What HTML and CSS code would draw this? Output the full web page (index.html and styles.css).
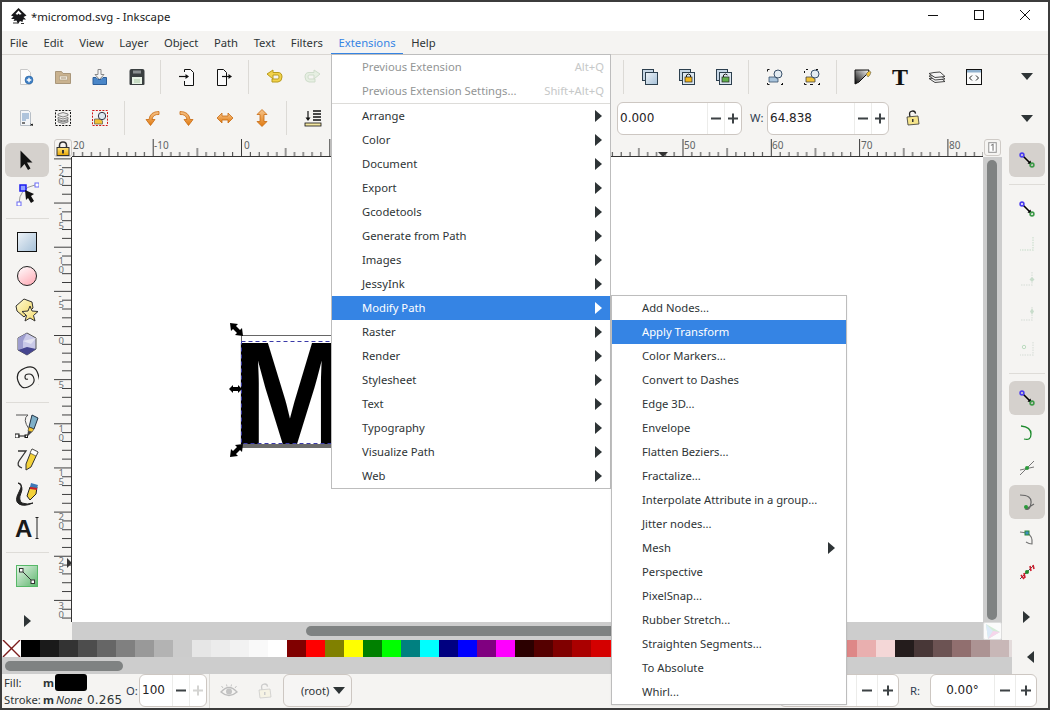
FILE: index.html
```html
<!DOCTYPE html>
<html lang="en">
<head>
<meta charset="utf-8">
<title>Inkscape</title>
<link rel="stylesheet" href="styles.css">
</head>
<body>
<svg class="defs" width="0" height="0" aria-hidden="true">
  <defs>
    <linearGradient id="gBlue" x1="0" y1="0" x2="1" y2="1"><stop offset="0" stop-color="#eef3f8"/><stop offset="1" stop-color="#a5c0d8"/></linearGradient>
    <linearGradient id="gPink" x1="0" y1="0" x2="0.6" y2="1"><stop offset="0" stop-color="#fff"/><stop offset="1" stop-color="#ffb3bd"/></linearGradient>
    <linearGradient id="gYellow" x1="0" y1="0" x2="1" y2="1"><stop offset="0" stop-color="#fffbd8"/><stop offset="1" stop-color="#f2d65e"/></linearGradient>
    <linearGradient id="gGold" x1="0" y1="0" x2="0" y2="1"><stop offset="0" stop-color="#ffe680"/><stop offset="1" stop-color="#e8a400"/></linearGradient>
    <linearGradient id="gGreen" x1="0" y1="0" x2="1" y2="1"><stop offset="0" stop-color="#e8f6ea"/><stop offset="1" stop-color="#5cb56c"/></linearGradient>
    <linearGradient id="gOrange" x1="0" y1="0" x2="0" y2="1"><stop offset="0" stop-color="#f7c48a"/><stop offset="1" stop-color="#e07a10"/></linearGradient>
    <linearGradient id="gPen" x1="0" y1="1" x2="1" y2="0"><stop offset="0" stop-color="#000"/><stop offset="1" stop-color="#fff"/></linearGradient>
    <symbol id="minus" viewBox="0 0 11 11"><rect x="0" y="4.5" width="10" height="2" fill="#3d4245"/></symbol>
    <symbol id="plus" viewBox="0 0 11 11"><path d="M0 5.5h10M5 .5v10" stroke="#3d4245" stroke-width="2" fill="none"/></symbol>
    <symbol id="plusOff" viewBox="0 0 11 11"><path d="M0 5.5h10M5 .5v10" stroke="#d4d4d2" stroke-width="2" fill="none"/></symbol>
    <symbol id="snap" viewBox="0 0 16 16"><path d="M4 4l7 7" stroke="#000" stroke-width="1.6"/><path d="M12.5 12.5l-1-4-3 3z" fill="#000"/><circle cx="3" cy="3" r="1.9" fill="none" stroke="#4a3cf0" stroke-width="1.6"/><circle cx="13" cy="13" r="1.9" fill="none" stroke="#3d9a48" stroke-width="1.6"/></symbol>
  </defs>
</svg>

<div class="window">
  <header class="title">
    <svg class="logo" width="17" height="17" viewBox="0 0 17 17"><path d="M8.500 0L1 7.500l2.500 1L1 11h3.500L3.500 13l3-.5L8 16l2-3 2.500 1 .5-2.500h3L13.500 9l3-1.500z" fill="#17171a"/><path d="M8.500 2.500L5.500 6l2 .8 1-1.300 1.200 1.300 2-.8z" fill="#fff"/><path d="M3 14.500h5v1H3zM11 15h3v1h-3z" fill="#333"/></svg>
    <span class="title-text">*micromod.svg - Inkscape</span>
    <div class="winctl">
      <svg width="46" height="29" viewBox="0 0 46 29"><path d="M18 13.500h10" stroke="#111"/></svg>
      <svg width="46" height="29" viewBox="0 0 46 29"><rect x="18.500" y="8.500" width="9" height="9" fill="none" stroke="#111"/></svg>
      <svg width="46" height="29" viewBox="0 0 46 29"><path d="M18 8l10 10M28 8L18 18" stroke="#111" fill="none"/></svg>
    </div>
  </header>

  <nav class="menubar">
    <span class="mi">File</span><span class="mi">Edit</span><span class="mi">View</span><span class="mi">Layer</span><span class="mi">Object</span><span class="mi">Path</span><span class="mi">Text</span><span class="mi">Filters</span><span class="mi mi-open">Extensions</span><span class="mi">Help</span>
  </nav>

  <div class="toolbar tb1">
    <div class="btn"><svg width="18" height="18" viewBox="0 0 18 18"><path d="M3.500 1.500h7l3 3v12h-10z" fill="#fbfbfb" stroke="#c9c9c9"/><circle cx="12" cy="12" r="4" fill="#3f7fc4" stroke="#1f5a9a" stroke-width=".5"/><path d="M9.700 12h4.600M12 9.700v4.600" stroke="#fff" stroke-width="1.400"/></svg></div>
    <div class="btn"><svg width="18" height="18" viewBox="0 0 18 18"><path d="M1.500 3.500h6l1.500 2h7.500v10h-15z" fill="#c9b28f" stroke="#a9967a"/><rect x="5.500" y="8" width="8" height="4" fill="#efe8dc" stroke="#a9967a" stroke-width=".6"/><path d="M7 10h5" stroke="#a9967a"/></svg></div>
    <div class="btn"><svg width="18" height="18" viewBox="0 0 18 18"><path d="M7 1.500h3v5h3l-4.500 5-4.500-5h3z" fill="#f5f5f5" stroke="#8a8a8a"/><path d="M2 9.500h3l2 2h3l2-2h3.500v7H2z" fill="#4a86c8" stroke="#2d5f9a"/></svg></div>
    <div class="btn"><svg width="18" height="18" viewBox="0 0 18 18"><path d="M1.500 3q0-2 2-2h11q2 0 2 2v13q0 1-1 1h-13q-1 0-1-1z" fill="#3a3f40"/><rect x="5" y="2.500" width="8" height="3" fill="#8b9091"/><rect x="4" y="9" width="10" height="7" fill="#e7f2e5"/><path d="M6 12h6M6 14h6" stroke="#a8c5a3"/></svg></div>
    <i class="sep sep-a"></i>
    <div class="btn"><svg width="18" height="18" viewBox="0 0 18 18"><path d="M6.500 4V1.500h6l3 3v13h-9V13" fill="#fafafa" stroke="#111"/><path d="M1 8.500h9" stroke="#111" stroke-width="1.200"/><path d="M11 8.500L7.500 6v5z" fill="#111"/></svg></div>
    <div class="btn"><svg width="18" height="18" viewBox="0 0 18 18"><path d="M2.500 1.500h6l3 3v13h-9z" fill="#fafafa" stroke="#111"/><path d="M7 8.500h8" stroke="#111" stroke-width="1.200"/><path d="M17 8.500L13.500 6v5z" fill="#111"/></svg></div>
    <i class="sep sep-b"></i>
    <div class="btn"><svg width="18" height="18" viewBox="0 0 18 18"><path d="M1 6l6-4v2.500h5q4 0 4 4.500t-4 5H6v-3h6q1 0 1-2t-1-2H7V11z" fill="#f2d24a" stroke="#b89a1c"/></svg></div>
    <div class="btn"><svg width="18" height="18" viewBox="0 0 18 18"><path d="M17 6l-6-4v2.500H6Q2 4.500 2 9t4 5h6v-3H6q-1 0-1-2t1-2h5V11z" fill="#e6efe2" stroke="#cfdccb"/></svg></div>
    <div class="spacer"></div>
    <i class="sep sep-c"></i>
    <div class="btn"><svg width="18" height="18" viewBox="0 0 18 18"><rect x="1.500" y="1.500" width="11" height="11" fill="#c7d7e6" stroke="#2c3f4e"/><rect x="4.500" y="4.500" width="12" height="12" fill="url(#gBlue)" stroke="#2c3f4e"/></svg></div>
    <div class="btn"><svg width="18" height="18" viewBox="0 0 18 18"><rect x="1.500" y="1.500" width="11" height="11" fill="#c7d7e6" stroke="#2c3f4e"/><rect x="4.500" y="4.500" width="12" height="12" fill="#dce7f0" stroke="#2c3f4e"/><rect x="7" y="9" width="7" height="5" fill="#f4b81e" stroke="#222" stroke-width=".7"/><path d="M8.500 9V7q2-2 4 0v2" fill="none" stroke="#222"/></svg></div>
    <div class="btn"><svg width="18" height="18" viewBox="0 0 18 18"><rect x="1.500" y="1.500" width="11" height="11" fill="#c7d7e6" stroke="#2c3f4e"/><rect x="4.500" y="4.500" width="12" height="12" fill="#dce7f0" stroke="#2c3f4e"/><rect x="7" y="9" width="7" height="5" fill="#5fae4c" stroke="#222" stroke-width=".7"/><path d="M8.500 9V7q2-2 4 0" fill="none" stroke="#222"/></svg></div>
    <i class="sep sep-b"></i>
    <div class="btn"><svg width="18" height="18" viewBox="0 0 18 18"><path d="M1.500 1.500h2M1.500 16.500h2M15 16.500h2M1.500 1.500v2M1.500 15v1.500M16.500 15v1.500" stroke="#111" fill="none"/><path d="M3 9h6l3 2v3H3z" fill="#a9c4dc" stroke="#39506a" stroke-width=".8"/><circle cx="12" cy="6" r="4" fill="#e4ecf2" stroke="#39506a"/></svg></div>
    <div class="btn"><svg width="18" height="18" viewBox="0 0 18 18"><path d="M3 1.500h2M13 1.500h2M1.500 16.500h2M15 16.500h2M1.500 3v2M1.500 15v1.500M16.500 15v1.500M7 16.500h3" stroke="#111" fill="none"/><path d="M3 9h6l3 2v3H3z" fill="#f0c238" stroke="#444" stroke-width=".8"/><circle cx="12" cy="6" r="4" fill="#e4ecf2" stroke="#39506a"/></svg></div>
    <i class="sep sep-b"></i>
    <div class="btn"><svg width="18" height="18" viewBox="0 0 18 18"><path d="M1 2h14l-1 3-9 9-4 2z" fill="url(#gPen)" stroke="#111"/><path d="M12 6l3-3 2 1-1 3-2 2z" fill="#f0c238" stroke="#555" stroke-width=".5"/></svg></div>
    <div class="btn"><svg class="ttool" width="18" height="18" viewBox="0 0 18 18"><text x="9" y="17" text-anchor="middle">T</text></svg></div>
    <div class="btn"><svg width="18" height="18" viewBox="0 0 18 18"><path d="M1 10.500l6 4 10-1-5-4z" fill="#f4f4f4" stroke="#333" stroke-width=".9"/><path d="M1 8l6 4 10-1-5-4z" fill="#f4f4f4" stroke="#333" stroke-width=".9"/><path d="M1 5.500l6 4 10-1-5-4.500-6 .5z" fill="#f4f4f4" stroke="#333" stroke-width=".9"/></svg></div>
    <div class="btn"><svg width="18" height="18" viewBox="0 0 18 18"><rect x="1.500" y="1.500" width="15" height="15" fill="#fafafa" stroke="#111"/><rect x="2" y="2" width="14" height="2.500" fill="#8fb0cd"/><path d="M7 7.500L4.500 10 7 12.500M11 7.500L13.500 10 11 12.500" fill="none" stroke="#222"/></svg></div>
    <div class="more"><i class="tri-down"></i></div>
  </div>

  <div class="toolbar tb2">
    <div class="btn"><svg width="18" height="18" viewBox="0 0 18 18"><path d="M3.500 1.500h8l2 2v13h-10z" fill="#f3f5f8" stroke="#b8bfc7"/><path d="M5 5h7M5 7h7M5 9h7M5 11h4" stroke="#6c93c0" stroke-width="1.200"/><rect x="5" y="13" width="3" height="2" fill="#777"/><path d="M13.500 15l2.500 1.500M16 15l-2.500 1.500" stroke="#111"/></svg></div>
    <div class="btn"><svg width="18" height="18" viewBox="0 0 18 18"><rect x="1.500" y="1.500" width="15" height="15" fill="none" stroke="#111" stroke-dasharray="2 1.300"/><path d="M4 5l5-1.500 5 1.500v1.500l-5 1.500-5-1.500zM4 8.500l5 1.500 5-1.500v2l-5 1.500-5-1.500zM4 11.500l5 1.500 5-1.500v1.500l-5 1.500-5-1.500z" fill="#e9e9e9" stroke="#555" stroke-width=".7"/></svg></div>
    <div class="btn"><svg width="18" height="18" viewBox="0 0 18 18"><rect x="1.500" y="1.500" width="15" height="15" fill="none" stroke="#d01616" stroke-dasharray="2 1.300"/><path d="M3.500 10h6l2 2v3h-8z" fill="#f0c238" stroke="#555" stroke-width=".7"/><circle cx="11" cy="7" r="3.700" fill="#dce7f0" stroke="#334"/></svg></div>
    <i class="sep sep-d"></i>
    <div class="btn"><svg width="18" height="18" viewBox="0 0 18 18"><path d="M17 2.500v3q-6-.5-7 5h3l-4.500 6-4.500-6h3q1-8 10-8z" fill="url(#gOrange)" stroke="#c86a10" stroke-width=".8"/></svg></div>
    <div class="btn"><svg width="18" height="18" viewBox="0 0 18 18"><path d="M1 2.500v3q6-.5 7 5H5l4.500 6 4.500-6h-3q-1-8-10-8z" fill="url(#gOrange)" stroke="#c86a10" stroke-width=".8"/></svg></div>
    <div class="btn"><svg width="18" height="18" viewBox="0 0 18 18"><path d="M1 9l5-5v3h6V4l5 5-5 5v-3H6v3z" fill="url(#gOrange)" stroke="#c86a10" stroke-width=".8"/></svg></div>
    <div class="btn"><svg width="18" height="18" viewBox="0 0 18 18"><path d="M9 .5l5 5h-3v7h3l-5 5-5-5h3v-7H4z" fill="url(#gOrange)" stroke="#c86a10" stroke-width=".8"/></svg></div>
    <i class="sep sep-d"></i>
    <div class="btn"><svg width="18" height="18" viewBox="0 0 18 18"><rect x="1" y="14" width="16" height="3" fill="#f3e6a0" stroke="#111" stroke-width=".8"/><path d="M4 2v8" stroke="#111" stroke-width="1.200"/><path d="M1.500 8.500h5L4 12z" fill="#111"/><path d="M9 2h8M9 5h8M9 8h8M9 11h8" stroke="#111" stroke-width="1.600"/></svg></div>
    <div class="spacer"></div>
    <div class="spin spin-x"><span class="val">0.000</span><span class="cell"><svg width="11" height="11"><use href="#minus"/></svg></span><span class="cell"><svg width="11" height="11"><use href="#plus"/></svg></span></div>
    <span class="lab lab-w">W:</span>
    <div class="spin spin-w"><span class="val">64.838</span><span class="cell"><svg width="11" height="11"><use href="#minus"/></svg></span><span class="cell"><svg width="11" height="11"><use href="#plus"/></svg></span></div>
    <div class="lockbtn"><svg width="14" height="16" viewBox="0 0 14 16"><path d="M4 7V4q0-3 3-3t3 3" transform="rotate(-8 7 7)" fill="none" stroke="#222" stroke-width="1.300"/><path d="M1 7l11-1 1 8-11 1z" fill="#f5e48b" stroke="#333" stroke-width=".8"/><rect x="6" y="9" width="1.500" height="3" fill="#333"/></svg></div>
    <div class="more"><i class="tri-down"></i></div>
  </div>

  <main class="work">
    <aside class="tools">
      <div class="tool active"><svg width="24" height="24" viewBox="0 0 24 24"><path d="M5.500 2.500v18l4-4.500 3.500 6 2.500-1.500-3.500-6h5.500z" fill="#111"/></svg></div>
      <div class="tool"><svg width="24" height="24" viewBox="0 0 24 24"><path d="M4 22Q4 6 20 3" fill="none" stroke="#999" stroke-width="1"/><rect x="20" y="1" width="4" height="4" fill="#fff" stroke="#6a6af5"/><rect x="2" y="20" width="4" height="4" fill="#fff" stroke="#6a6af5"/><rect x="5" y="3" width="6" height="6" fill="#8fa0ff" stroke="#1b1bf0" stroke-width="1.500"/><path d="M10 8l9 4-3 2 3 5-3 2-3-5-2 2z" fill="#111"/></svg></div>
      <i class="hsep"></i>
      <div class="tool"><svg width="24" height="24" viewBox="0 0 24 24"><rect x="2.500" y="2.500" width="19" height="19" fill="url(#gBlue)" stroke="#111" stroke-width="1"/></svg></div>
      <div class="tool"><svg width="24" height="24" viewBox="0 0 24 24"><circle cx="12" cy="12" r="9.500" fill="url(#gPink)" stroke="#222"/></svg></div>
      <div class="tool"><svg width="24" height="24" viewBox="0 0 24 24"><path d="M9 1l8 3 1 6-9 9-7-6-1-5z" fill="url(#gYellow)" stroke="#333"/><path d="M15 8l2 5 6 .5-4.500 4 1.500 5.500-5-3-5 3 1.500-5.500L7 13.500l6-.5z" fill="url(#gYellow)" stroke="#333"/></svg></div>
      <div class="tool"><svg width="24" height="24" viewBox="0 0 24 24"><path d="M12 1l9 5v11l-9 6-9-5V6z" fill="#c9c9e8" stroke="#555"/><path d="M12 1L3 6v12l5-2 0-7z" fill="#9d9dce"/><path d="M3 18l9 5 9-6-9-2z" fill="#45458f"/><path d="M8 9l13-3-5 6z" fill="#e4e4f2"/></svg></div>
      <div class="tool"><svg width="24" height="24" viewBox="0 0 24 24"><path d="M13 13q-3 1-3-2t4-3 5 5-6 8-10-6 7-13 13 6 1 11" fill="none" stroke="#222" stroke-width="1.200"/></svg></div>
      <i class="hsep"></i>
      <div class="tool"><svg width="24" height="24" viewBox="0 0 24 24"><path d="M1 1h12q-6 4 1 14" fill="none" stroke="#555"/><rect x="0" y="20" width="4" height="4" fill="#fff" stroke="#111"/><rect x="10" y="21" width="2.500" height="2.500" fill="#fff" stroke="#111"/><path d="M3 22h8" stroke="#111"/><path d="M17 1l6 3-4 11-5-2z" fill="#7fb0c8" stroke="#234"/><path d="M14 13l5 2-2 3-4-1z" fill="#f3c730" stroke="#333" stroke-width=".6"/><path d="M13 17l4 1-5 5z" fill="#444"/></svg></div>
      <div class="tool"><svg width="24" height="24" viewBox="0 0 24 24"><path d="M3 3h8L4 13q-3 5 3 7" fill="none" stroke="#333" stroke-width="1.300"/><path d="M17 1l6 3-7 15-5 3 0-6z" fill="#f3d23a" stroke="#333"/><path d="M17 1l6 3-2 4-6-3z" fill="#fff" stroke="#333" stroke-width=".6"/></svg></div>
      <div class="tool"><svg width="24" height="24" viewBox="0 0 24 24"><path d="M3 1q6 3 3 10t1 10q5 2 11 0-9 4-14 1T4 10 3 1z" fill="#222" stroke="#222"/><path d="M15 5h7l-1 7-6 6-3-4z" fill="#f3d23a" stroke="#222"/><path d="M16 1l7 2-1 3-7-1z" fill="#3d78b8"/><path d="M15 5l7 1v2l-7-1z" fill="#c8202a"/></svg></div>
      <div class="tool"><svg class="atool" width="24" height="24" viewBox="0 0 24 24"><text x="0" y="21">A</text><path d="M20.500 1.500h3M22 1.500v21M20.500 22.500h3" stroke="#222" fill="none"/></svg></div>
      <i class="hsep"></i>
      <div class="tool"><svg width="24" height="24" viewBox="0 0 24 24"><rect x=".5" y=".5" width="21" height="21" fill="url(#gGreen)" stroke="#57b868" transform="translate(1 1)"/><path d="M6 6l12 12" stroke="#333"/><rect x="4.500" y="4.500" width="3.500" height="3.500" fill="#fff" stroke="#333"/><rect x="16" y="16" width="3.500" height="3.500" fill="#fff" stroke="#333"/></svg></div>
      <div class="tool-arrow"><i class="tri-right big"></i></div>
    </aside>

    <div class="corner"><svg width="14" height="15" viewBox="0 0 14 15"><path d="M3.500 7V4.500Q3.500 1 7 1t3.500 3.500V7" fill="none" stroke="#333" stroke-width="1.500"/><rect x="1" y="6.500" width="12" height="8" fill="url(#gGold)" stroke="#333"/><rect x="6" y="9" width="2" height="3.500" fill="#333"/></svg></div>

    <svg class="ruler-top" width="911" height="19" viewBox="72 138 911 19">
      <defs>
        <pattern id="tickH" patternUnits="userSpaceOnUse" x="241" y="138" width="88.300" height="19">
          <path d="M.5 1v18M44.650 10v9M9.330 14v5M18.160 14v5M26.990 14v5M35.820 14v5M53.480 14v5M62.310 14v5M71.140 14v5M79.970 14v5" stroke="#3a3a3a" fill="none"/>
        </pattern>
      </defs>
      <rect x="72" y="138" width="911" height="19" fill="url(#tickH)"/>
      <path d="M72 156.500H983" stroke="#333"/>
      <text class="rt" x="73" y="149">20</text>
      <text class="rt" x="154" y="149">-10</text>
      <text class="rt" x="244" y="149">0</text>
      <text class="rt" x="684" y="149">50</text>
      <text class="rt" x="772" y="149">60</text>
      <text class="rt" x="861" y="149">70</text>
      <text class="rt" x="949" y="149">80</text>
      <path d="M658 152h10l-5 5z" fill="#333"/>
    </svg>

    <svg class="ruler-left" width="18" height="465" viewBox="54 157 18 465">
      <defs>
        <pattern id="tickV" patternUnits="userSpaceOnUse" x="54" y="158.400" width="18" height="44.150">
          <path d="M0 .5h18M8 9.330h10M8 18.160h10M8 26.990h10M8 35.820h10" stroke="#3a3a3a" fill="none"/>
        </pattern>
      </defs>
      <rect x="54" y="157" width="18" height="465" fill="url(#tickV)"/>
      <path d="M71.500 157V622" stroke="#333"/>
      <g class="rl">
        <text x="58.500" y="168">-<tspan x="58.500" dy="8">2</tspan><tspan x="58.500" dy="9">0</tspan></text>
        <text x="58.500" y="211">-<tspan x="58.500" dy="9">1</tspan><tspan x="58.500" dy="9">5</tspan></text>
        <text x="58.500" y="255">-<tspan x="58.500" dy="9">1</tspan><tspan x="58.500" dy="9">0</tspan></text>
        <text x="58.500" y="299">-<tspan x="58.500" dy="9">5</tspan></text>
        <text x="58.500" y="344">0</text>
        <text x="58.500" y="388">5</text>
        <text x="58.500" y="432">1<tspan x="58.500" dy="9">0</tspan></text>
        <text x="58.500" y="476">1<tspan x="58.500" dy="9">5</tspan></text>
        <text x="58.500" y="520">2<tspan x="58.500" dy="9">0</tspan></text>
        <text x="58.500" y="564">2<tspan x="58.500" dy="9">5</tspan></text>
        <text x="58.500" y="609">3<tspan x="58.500" dy="9">0</tspan></text>
      </g>
      <path d="M67 558l5 5-5 5z" fill="#333"/>
    </svg>

    <div class="canvas">
      <svg width="911" height="465" viewBox="72 157 911 465">
        <path d="M241.500 446V335.500H340" fill="none" stroke="#666"/>
        <rect x="242" y="444" width="100" height="4" fill="#6b6b6b"/>
        <text class="bigM" transform="translate(231.500 444) scale(.96 1)" x="0" y="0">M</text>
        <rect x="241.500" y="341.500" width="120" height="102" fill="none" stroke="#3a3aa8" stroke-dasharray="4 3"/>
        <path d="M230 323l8 1-2 2 4 4 2-2 1 8-8-1 2-2-4-4-2 2z" fill="#000"/>
        <path d="M229 389l4-4v2h5v-2l4 4-4 4v-2h-5v2z" fill="#000"/>
        <path d="M230 456l8-1-2-2 4-4 2 2 1-8-8 1 2 2-4 4-2-2z" transform="translate(0 1)" fill="#000"/>
      </svg>
    </div>

    <div class="vscroll">
      <div class="guide"><svg width="14" height="14" viewBox="0 0 14 14"><rect x="3.500" y="2.500" width="7" height="9" fill="#fff" stroke="#999"/><path d="M5.500 5l2-1v6" fill="none" stroke="#777"/></svg></div>
      <div class="vthumb"></div>
    </div>

    <aside class="snapbar">
      <div class="snap active"><svg width="16" height="16"><use href="#snap"/></svg></div>
      <i class="hsep"></i>
      <div class="snap"><svg width="16" height="16"><use href="#snap"/></svg></div>
      <div class="snap"><svg width="16" height="16" viewBox="0 0 16 16"><path d="M14 1v13H1" fill="none" stroke="#d5e3d6" stroke-width="1.500" stroke-dasharray="1.500 1"/></svg></div>
      <div class="snap"><svg width="16" height="16" viewBox="0 0 16 16"><path d="M13 1v13H1" fill="none" stroke="#dfe4df" stroke-width="1.500" stroke-dasharray="1.500 1"/><path d="M13 6l2.500 2.500L13 11l-2.500-2.500z" fill="#c8dccb"/></svg></div>
      <div class="snap"><svg width="16" height="16" viewBox="0 0 16 16"><path d="M13 1v13H1" fill="none" stroke="#dfe4df" stroke-width="1.500" stroke-dasharray="1.500 1"/><path d="M13 2.500l2 3-2 3-2-3z" fill="#c8dccb"/></svg></div>
      <div class="snap"><svg width="16" height="16" viewBox="0 0 16 16"><path d="M14 1v13H1" fill="none" stroke="#dfe4df" stroke-width="1.500" stroke-dasharray="1.500 1"/><circle cx="5" cy="6" r="1.700" fill="none" stroke="#bcdcc0"/></svg></div>
      <i class="hsep hsep-r"></i>
      <div class="snap active"><svg width="16" height="16"><use href="#snap"/></svg></div>
      <div class="snap"><svg width="16" height="16" viewBox="0 0 16 16"><path d="M2 1q10 1 10 8t-7 5" fill="none" stroke="#1c8a2c" stroke-width="1.300"/></svg></div>
      <div class="snap"><svg width="16" height="16" viewBox="0 0 16 16"><path d="M1 15L15 1M1 10l14-3" stroke="#777" fill="none"/><circle cx="8" cy="8" r="2" fill="#2a9a3a"/></svg></div>
      <div class="snap active"><svg width="16" height="16" viewBox="0 0 16 16"><path d="M1 1q12 0 11 8t-6 6M15 10l-8 5" fill="none" stroke="#666" stroke-width="1.200"/><circle cx="7" cy="13" r="2" fill="#2a9a3a"/></svg></div>
      <div class="snap"><svg width="16" height="16" viewBox="0 0 16 16"><path d="M1 3l7 1q6 3 5 11-3 0-6-2" fill="none" stroke="#777" stroke-width="1.200"/><rect x="6" y="2" width="4" height="4" fill="#3f8fc0" stroke="#2a8a36"/></svg></div>
      <div class="snap"><svg width="16" height="16" viewBox="0 0 16 16"><path d="M1 15L15 1" stroke="#555"/><path d="M2 11l3 4M5 9l1 5M11 2l1 5M14 1l1 4" stroke="#d01c2c" stroke-width="1.600"/><circle cx="8" cy="8" r="2" fill="#1f8a2c"/></svg></div>
      <div class="tool-arrow tool-arrow-r"><i class="tri-right big"></i></div>
    </aside>

    <div class="hscroll"><div class="hthumb"></div><div class="colorwheel"><svg width="17" height="17" viewBox="0 0 17 17"><path d="M2 1l14 8-12 7z" fill="#d4ecd8"/><path d="M2 1l7 7-5 8z" fill="#dceaf8"/><path d="M16 9l-7-1-5 8z" fill="#f6d6ec"/></svg></div></div>

    <div class="palette">
      <div class="sw-x"><svg width="19" height="17" viewBox="0 0 19 17"><path d="M1 0l17 17M18 0L1 17" stroke="#7c1c1c" stroke-width="1.400"/></svg></div>
      <i class="sw" style="background:#000000"></i><i class="sw" style="background:#1a1a1a"></i><i class="sw" style="background:#333333"></i><i class="sw" style="background:#4d4d4d"></i><i class="sw" style="background:#666666"></i><i class="sw" style="background:#808080"></i><i class="sw" style="background:#999999"></i><i class="sw" style="background:#b3b3b3"></i><i class="sw" style="background:#cccccc"></i><i class="sw" style="background:#e6e6e6"></i><i class="sw" style="background:#ececec"></i><i class="sw" style="background:#f2f2f2"></i><i class="sw" style="background:#f9f9f9"></i><i class="sw" style="background:#ffffff"></i><i class="sw" style="background:#800000"></i><i class="sw" style="background:#ff0000"></i><i class="sw" style="background:#808000"></i><i class="sw" style="background:#ffff00"></i><i class="sw" style="background:#008000"></i><i class="sw" style="background:#00ff00"></i><i class="sw" style="background:#008080"></i><i class="sw" style="background:#00ffff"></i><i class="sw" style="background:#000080"></i><i class="sw" style="background:#0000ff"></i><i class="sw" style="background:#800080"></i><i class="sw" style="background:#ff00ff"></i><i class="sw" style="background:#2b0000"></i><i class="sw" style="background:#550000"></i><i class="sw" style="background:#800000"></i><i class="sw" style="background:#aa0000"></i><i class="sw" style="background:#d40000"></i><i class="sw" style="background:#ff0000"></i><i class="sw" style="background:#ff2a2a"></i><i class="sw" style="background:#ff5555"></i><i class="sw" style="background:#ff8080"></i><i class="sw" style="background:#ffaaaa"></i><i class="sw" style="background:#ffd5d5"></i><i class="sw" style="background:#280b0b"></i><i class="sw" style="background:#501616"></i><i class="sw" style="background:#782121"></i><i class="sw" style="background:#a02c2c"></i><i class="sw" style="background:#c83737"></i><i class="sw" style="background:#d35f5f"></i><i class="sw" style="background:#de8787"></i><i class="sw" style="background:#e9afaf"></i><i class="sw" style="background:#f4d7d7"></i><i class="sw" style="background:#241c1c"></i><i class="sw" style="background:#483737"></i><i class="sw" style="background:#6c5353"></i><i class="sw" style="background:#916f6f"></i><i class="sw" style="background:#ac9393"></i><i class="sw" style="background:#c8b7b7"></i><i class="sw" style="background:#e3dbdb"></i>
    </div>
    <div class="palscroll"><div class="palthumb"></div></div>
    <div class="palarrow"><i class="tri-left big"></i></div>
  </main>

  <footer class="status">
    <div class="fs">
      <div class="fs-row"><span class="fs-lab">Fill:</span><b class="fs-m">m</b><i class="fs-swatch"></i></div>
      <div class="fs-row"><span class="fs-lab">Stroke:</span><b class="fs-m">m</b><em class="fs-none">None</em><span class="fs-w">0.265</span></div>
    </div>
    <span class="lab lab-o">O:</span>
    <div class="spin spin-o"><span class="val">100</span><span class="cell"><svg width="11" height="11"><use href="#minus"/></svg></span><span class="cell"><svg width="11" height="11"><use href="#plusOff"/></svg></span></div>
    <i class="vsep"></i>
    <div class="st-ic st-first"><svg width="18" height="14" viewBox="0 0 18 14"><path d="M1 8q8-9 16 0-8 7-16 0z" fill="none" stroke="#bdbdbd" stroke-width="1.300"/><circle cx="9" cy="7.500" r="3" fill="#c4c4c4"/><path d="M3 4L1.500 2M7 2.500L6.500 .5M11 2.500l.5-2M15 4l1.500-2" stroke="#c4c4c4"/></svg></div>
    <div class="st-ic"><svg width="14" height="16" viewBox="0 0 14 16"><path d="M4 7V4q0-3 3-3t3 3" transform="rotate(-8 7 7)" fill="none" stroke="#ccc" stroke-width="1.300"/><path d="M1 7l11-1 1 8-11 1z" fill="#f6f3e4" stroke="#ccc" stroke-width=".8"/><rect x="6" y="9" width="1.500" height="3" fill="#ccc"/></svg></div>
    <div class="layer"><span class="layer-name">(root)</span><i class="tri-down"></i></div>
    <div class="status-right">
      <div class="spin spin-y"><span class="val"></span><span class="cell"><svg width="11" height="11"><use href="#minus"/></svg></span><span class="cell"><svg width="11" height="11"><use href="#plus"/></svg></span></div>
      <span class="lab lab-r">R:</span>
      <div class="spin spin-r"><span class="val val-c">0.00°</span><span class="cell"><svg width="11" height="11"><use href="#minus"/></svg></span><span class="cell"><svg width="11" height="11"><use href="#plus"/></svg></span></div>
    </div>
  </footer>

  <div class="menu menu-ext">
    <div class="item off"><span>Previous Extension</span><span class="key">Alt+Q</span></div>
    <div class="item off"><span>Previous Extension Settings...</span><span class="key">Shift+Alt+Q</span></div>
    <i class="menu-sep"></i>
    <div class="item"><span>Arrange</span><i class="tri-right"></i></div>
    <div class="item"><span>Color</span><i class="tri-right"></i></div>
    <div class="item"><span>Document</span><i class="tri-right"></i></div>
    <div class="item"><span>Export</span><i class="tri-right"></i></div>
    <div class="item"><span>Gcodetools</span><i class="tri-right"></i></div>
    <div class="item"><span>Generate from Path</span><i class="tri-right"></i></div>
    <div class="item"><span>Images</span><i class="tri-right"></i></div>
    <div class="item"><span>JessyInk</span><i class="tri-right"></i></div>
    <div class="item sel"><span>Modify Path</span><i class="tri-right"></i></div>
    <div class="item"><span>Raster</span><i class="tri-right"></i></div>
    <div class="item"><span>Render</span><i class="tri-right"></i></div>
    <div class="item"><span>Stylesheet</span><i class="tri-right"></i></div>
    <div class="item"><span>Text</span><i class="tri-right"></i></div>
    <div class="item"><span>Typography</span><i class="tri-right"></i></div>
    <div class="item"><span>Visualize Path</span><i class="tri-right"></i></div>
    <div class="item"><span>Web</span><i class="tri-right"></i></div>
  </div>

  <div class="menu menu-sub">
    <div class="item"><span>Add Nodes...</span></div>
    <div class="item sel"><span>Apply Transform</span></div>
    <div class="item"><span>Color Markers...</span></div>
    <div class="item"><span>Convert to Dashes</span></div>
    <div class="item"><span>Edge 3D...</span></div>
    <div class="item"><span>Envelope</span></div>
    <div class="item"><span>Flatten Beziers...</span></div>
    <div class="item"><span>Fractalize...</span></div>
    <div class="item"><span>Interpolate Attribute in a group...</span></div>
    <div class="item"><span>Jitter nodes...</span></div>
    <div class="item"><span>Mesh</span><i class="tri-right"></i></div>
    <div class="item"><span>Perspective</span></div>
    <div class="item"><span>PixelSnap...</span></div>
    <div class="item"><span>Rubber Stretch...</span></div>
    <div class="item"><span>Straighten Segments...</span></div>
    <div class="item"><span>To Absolute</span></div>
    <div class="item"><span>Whirl...</span></div>
  </div>
</div>
</body>
</html>
```

FILE: styles.css
```css
* { box-sizing: border-box; }
html, body { margin: 0; height: 100%; overflow: hidden; }
body { background: #3c3c3c; font: 11.25px/1 "Noto Sans", "Open Sans", sans-serif; color: #2e3436; }
.defs { position: absolute; }
svg { display: block; }

.window { position: relative; width: 1050px; height: 710px; padding: 2px 2px 2px; background: #3c3c3c; overflow: hidden; }

.title { height: 29px; background: #fff; display: flex; align-items: center; padding-left: 8px; }
.logo { margin-right: 4px; }
.title-text { font-size: 11.35px; color: #1a1a1a; }
.winctl { margin-left: auto; display: flex; }

.menubar { height: 24px; background: #f5f4f2; border-bottom: 1px solid #d9d6d2; display: flex; }
.mi { padding: 6px 7.8px 0; height: 23px; }
.mi-open { color: #3584e4; border-bottom: 2px solid #3584e4; margin-bottom: -1px; height: 24px; }

.toolbar { display: flex; align-items: center; background: #f5f4f2; padding-left: 5px; padding-right: 3px; }
.tb1 { height: 43px; }
.tb2 { height: 40px; }
.btn { width: 37px; height: 34px; display: flex; align-items: center; justify-content: center; flex: none; }
.spacer { flex: 1; }
.sep { width: 1px; height: 34px; background: #dcdad6; flex: none; }
.sep-a { margin: 0 7px 0 5px; }
.sep-b { margin: 0 7px 0 6px; }
.sep-c { margin-right: 7px; }
.sep-d { margin: 0 7px 0 6px; }
.more { width: 36px; display: flex; justify-content: center; margin-left: 17px; flex: none; }
.tb2 .more { margin-left: 73px; }
.ttool, .atool { overflow: visible; }
.ttool text { font: bold 24px "Liberation Serif", serif; fill: #111; }
.atool text { font: bold 24px "Liberation Sans", sans-serif; fill: #1a1a1a; }

.tri-down { display: block; width: 0; height: 0; border: 6px solid transparent; border-top: 7px solid #2e3436; border-bottom: 0; }
.tri-right { display: block; width: 0; height: 0; border: solid transparent; border-width: 6px 0 6px 7px; border-left-color: #2e3436; }
.tri-left { display: block; width: 0; height: 0; border: solid transparent; border-width: 6px 7px 6px 0; border-right-color: #2e3436; }

.spin { display: flex; height: 33px; background: #fff; border: 1px solid #cdc7c2; border-radius: 6px; align-items: stretch; flex: none; }
.val { flex: 1; font: 12px/31px "DejaVu Sans", sans-serif; padding-left: 2px; color: #1f2224; }
.val-c { text-align: center; padding-left: 0; }
.cell { width: 17px; border-left: 1px solid #ececea; display: flex; align-items: center; justify-content: center; flex: none; }
.spin-x { width: 125px; }
.spin-w { width: 122px; }
.spin-o { width: 68px; }
.spin-y { width: 120px; }
.spin-y .cell, .spin-r .cell { width: 21px; }
.spin-r { width: 107px; }
.lab { flex: none; color: #2e3b50; }
.lab-w { width: 25px; padding-left: 8px; }
.lockbtn { width: 47px; flex: none; display: flex; justify-content: center; }

.work { display: grid; grid-template-columns: 52px 18px 911px 19px 10px 36px; grid-template-rows: 19px 465px 18px 17px 17px; background: #f5f4f2; }
.tools { grid-column: 1; grid-row: 1 / 4; padding: 5px 5px 0 3px; display: flex; flex-direction: column; align-items: center; }
.tool { width: 44px; height: 34px; flex: none; display: flex; align-items: center; justify-content: center; border-radius: 6px; }
.tool.active, .snap.active { background: #d5d1cd; }
.hsep { display: block; width: 43px; height: 1px; background: #dedcd8; margin: 7px 0 6px; flex: none; }
.tool-arrow { height: 34px; margin-top: 11px; display: flex; align-items: center; justify-content: center; flex: none; }
.corner { grid-column: 2; grid-row: 1; margin-top: 1px; border: 1px solid #cfcbc7; border-radius: 3px; display: flex; align-items: center; justify-content: center; }
.ruler-top { grid-column: 3; grid-row: 1; }
.ruler-left { grid-column: 2; grid-row: 2; }
.rt { font: 10px "Noto Sans", sans-serif; fill: #5f6466; }
.rl text { font: 9.5px "Noto Sans", sans-serif; fill: #6d7174; }
.canvas { grid-column: 3; grid-row: 2; background: #fff; overflow: hidden; }
.bigM { font: bold 146px "Liberation Sans", sans-serif; fill: #000; }

.vscroll { grid-column: 4; grid-row: 1 / 3; background: #f5f4f2; position: relative; }
.guide { height: 19px; padding: 1px 1px 0; }
.guide svg { width: 17px; height: 17px; border: 1px solid #cfcbc7; border-radius: 3px; background: #f5f4f2; }
.vscroll::before { content: ""; position: absolute; left: 0; right: 0; top: 19px; bottom: 0; background: #cdcdcd; }
.vthumb { position: relative; margin: 3px 0 0 4px; width: 10px; height: 460px; border-radius: 5px; background: #7f8282; }

.snapbar { grid-column: 5 / 7; grid-row: 1 / 4; padding-top: 5px; display: flex; flex-direction: column; align-items: center; padding-left: 3px; }
.snap { width: 36px; height: 34px; flex: none; display: flex; align-items: center; justify-content: center; border-radius: 6px; }
.snapbar .snap { height: 35px; }
.snapbar .snap.active { height: 34px; }
.snapbar .hsep { width: 36px; margin: 7px 0 6px; }
.snapbar .hsep-r { margin: 7px 0; }
.tool-arrow-r { margin-top: 11px; }

.hscroll { grid-column: 3 / 5; grid-row: 3; background: #cdcdcd; position: relative; }
.hthumb { position: absolute; left: 234px; top: 4px; width: 420px; height: 10px; border-radius: 5px; background: #7f8282; }
.colorwheel { position: absolute; right: 0; top: 0; width: 19px; height: 18px; background: #fbfbfb; border: 1px solid #ddd; border-radius: 2px; }

.palette { grid-column: 1 / 6; grid-row: 4; display: flex; overflow: hidden; background: #f5f4f2; }
.sw-x { width: 19px; height: 17px; background: #fff; flex: none; }
.sw { display: block; width: 19px; height: 17px; flex: none; }
.palscroll { grid-column: 1 / 6; grid-row: 5; background: #cdcdcd; padding: 4px 0 0 3px; }
.palthumb { width: 118px; height: 10px; border-radius: 5px; background: #7f8282; }
.palarrow { grid-column: 6; grid-row: 4 / 6; display: flex; align-items: center; justify-content: center; }

.status { height: 34px; background: #f5f4f2; display: flex; align-items: stretch; position: relative; }
.fs { width: 124px; padding-left: 2px; flex: none; }
.fs-row { height: 17px; display: flex; align-items: center; }
.fs-lab { width: 39px; flex: none; }
.fs-m { width: 12px; flex: none; font-weight: bold; }
.fs-swatch { display: block; width: 32px; height: 17px; background: #000; border-radius: 3px; }
.fs-none { margin-left: 1px; width: 31px; flex: none; }
.fs-w { font: 12px "DejaVu Sans", sans-serif; letter-spacing: .2px; }
.lab-o { width: 13px; align-self: center; }
.vsep { display: block; width: 1px; background: #dcdad6; margin: 0 0 0 2px; flex: none; }
.st-ic { width: 36px; display: flex; align-items: center; justify-content: center; flex: none; }
.st-first { margin-left: 1px; }
.layer { width: 69px; height: 33px; border: 1px solid #cdc7c2; border-radius: 6px; background: #f6f5f4; display: flex; align-items: center; padding-left: 17px; gap: 4px; font-size: 11px; flex: none; }
.status-right { margin-left: auto; padding-right: 11px; display: flex; align-items: stretch; }
.lab-r { width: 31px; padding-left: 11px; align-self: center; }

.menu { position: absolute; background: #fff; border: 1px solid #bdbdbd; }
.menu-ext { left: 331px; top: 54px; width: 280px; }
.menu-sub { left: 611px; top: 295px; width: 236px; box-shadow: 0 1px 2px rgba(0,0,0,.08); }
.item { height: 24px; display: flex; align-items: center; justify-content: space-between; padding: 0 8px 0 30px; white-space: nowrap; }
.menu-sub .item { padding-right: 11px; }
.item.off { color: #929595; }
.key { color: #c6c8c8; margin-right: -2px; }
.item.sel { background: #3584e4; color: #fff; }
.item.sel .tri-right { border-left-color: #fff; }
.menu-sep { display: block; height: 1px; background: #dddcd9; }
```
